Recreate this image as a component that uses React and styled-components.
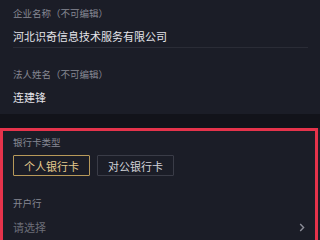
import React from "react";
import styled, { createGlobalStyle } from "styled-components";

const GlobalStyle = createGlobalStyle`
  html, body {
    margin: 0;
    padding: 0;
    background: #1b1d27;
    font-family: "Noto Sans CJK SC", "Noto Sans", sans-serif;
  }
`;

const Page = styled.div`
  width: 320px;
  height: 240px;
  overflow: hidden;
  background: #1b1d27;
  display: flex;
  flex-direction: column;
`;

// locked info fields at the top
const InfoSection = styled.div`
  display: flex;
  flex-direction: column;
`;

const Field = styled.div`
  margin: 0 12px 0 13px;
  padding: ${(p) => p.$pad};
  border-bottom: ${(p) => (p.$divider ? "1px solid #2a2c36" : "none")};
`;

const Label = styled.div`
  font-size: 9.5px;
  line-height: 12px;
  color: #868893;
`;

const Value = styled.div`
  margin-top: 9px;
  font-size: 11px;
  line-height: 16px;
  color: #e4e4ea;
`;

const Band = styled.div`
  height: 14px;
  background: #12131a;
`;

// highlighted bank card block
const CardBox = styled.div`
  width: 318px;
  box-sizing: border-box;
  border: 3px solid #e5334b;
  border-bottom: none;
  padding: 5px 10px 0 10px;
  flex: 1;
  display: flex;
  flex-direction: column;
`;

const ButtonRow = styled.div`
  display: flex;
  gap: 7px;
  margin-top: 7px;
`;

const TypeButton = styled.div`
  height: 21px;
  box-sizing: border-box;
  padding: 0 10px;
  display: flex;
  align-items: center;
  font-size: 11px;
  border: 1px solid ${(p) => (p.$active ? "#b7995a" : "#3a3c47")};
  color: ${(p) => (p.$active ? "#e6cb8f" : "#d2d3d9")};
  border-radius: 1px;
`;

const BankLabel = styled(Label)`
  margin-top: 21px;
`;

const SelectRow = styled.div`
  margin-top: 10px;
  display: flex;
  align-items: center;
  justify-content: space-between;
`;

const Placeholder = styled.div`
  font-size: 11px;
  line-height: 16px;
  color: #6c6e78;
`;

const Chevron = () => (
  <svg width="6" height="9" viewBox="0 0 6 9" style={{ marginRight: 0 }}>
    <path d="M1.2 1 L4.6 4.5 L1.2 8" fill="none" stroke="#8c8e98" strokeWidth="1.4" />
  </svg>
);

export default function App() {
  return (
    <Page>
      <GlobalStyle />
      <InfoSection>
        <Field $pad="7px 0 3px" $divider>
          <Label>企业名称（不可编辑）</Label>
          <Value>河北识奇信息技术服务有限公司</Value>
        </Field>
        <Field $pad="20px 0 9px">
          <Label>法人姓名（不可编辑）</Label>
          <Value>连建锋</Value>
        </Field>
      </InfoSection>
      <Band />
      <CardBox>
        <Label>银行卡类型</Label>
        <ButtonRow>
          <TypeButton $active>个人银行卡</TypeButton>
          <TypeButton>对公银行卡</TypeButton>
        </ButtonRow>
        <BankLabel>开户行</BankLabel>
        <SelectRow>
          <Placeholder>请选择</Placeholder>
          <Chevron />
        </SelectRow>
      </CardBox>
    </Page>
  );
}
